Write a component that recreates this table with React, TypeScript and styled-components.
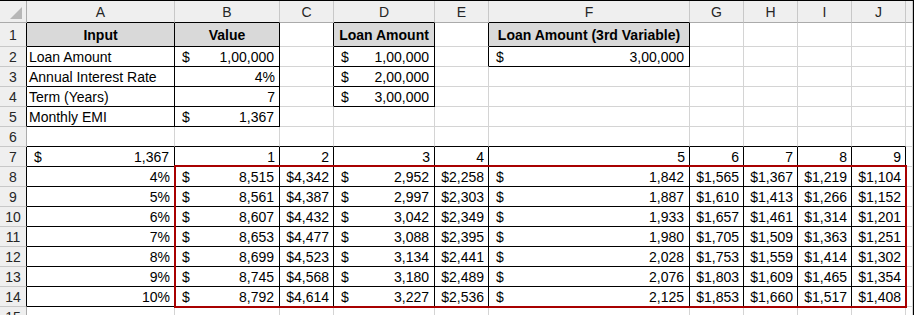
import React from 'react';
import styled, { createGlobalStyle } from 'styled-components';

const GlobalStyle = createGlobalStyle`
  body {
    margin: 0;
    background: #fff;
  }
`;

const GRID = '#d4d4d4';
const INK = '#000';
const HEAD_BG = '#efefef';
const HEAD_LINE = '#ababab';
const TITLE_BG = '#d9d9d9';

const COL_WIDTHS = [148, 105, 54, 101, 54, 201, 54, 54, 54, 54, 7];
const LETTERS = ['A', 'B', 'C', 'D', 'E', 'F', 'G', 'H', 'I', 'J', ''];

type Kind = 'text' | 'right' | 'center' | 'acc';

interface ICell {
  kind: Kind;
  value: string;
  bold?: boolean;
  title?: boolean;
}

const Sheet = styled.div`
  position: relative;
  width: 914px;
  height: 315px;
  box-sizing: border-box;
  border-top: 1px solid #000;
  border-right: 1px solid #000;
  overflow: hidden;
  display: grid;
  grid-template-columns: 27px ${COL_WIDTHS.map(w => `${w}px`).join(' ')};
  grid-template-rows: 22px 24px repeat(14, 20px);
  font-family: 'Liberation Sans', Arial, sans-serif;
  font-size: 14px;
  color: #000;
`;

const Corner = styled.div`
  position: relative;
  background: ${HEAD_BG};
  border-right: 1px solid ${HEAD_LINE};
  border-bottom: 1px solid ${HEAD_LINE};
  svg {
    position: absolute;
    right: 4px;
    bottom: 3px;
  }
`;

const ColHead = styled.div<{ $edge: string }>`
  display: flex;
  align-items: center;
  justify-content: center;
  background: ${HEAD_BG};
  color: #262626;
  border-right: 1px solid #c8c8c8;
  border-bottom: 1px solid ${({ $edge }) => $edge};
  overflow: hidden;
`;

const RowHead = styled.div<{ $edge: string }>`
  display: flex;
  align-items: center;
  justify-content: center;
  background: ${HEAD_BG};
  color: #262626;
  border-right: 1px solid ${({ $edge }) => $edge};
  border-bottom: 1px solid #c8c8c8;
`;

const Cell = styled.div<{
  $right: string;
  $bottom: string;
  $kind: Kind;
  $bold?: boolean;
  $title?: boolean;
}>`
  display: flex;
  align-items: center;
  justify-content: ${({ $kind }) =>
    $kind === 'acc' ? 'space-between' : $kind === 'right' ? 'flex-end' : $kind === 'center' ? 'center' : 'flex-start'};
  padding: ${({ $kind }) => ($kind === 'acc' ? '0 5px 0 7px' : $kind === 'right' ? '0 4px 0 2px' : '0 2px')};
  background: ${({ $title }) => ($title ? TITLE_BG : 'transparent')};
  font-weight: ${({ $bold }) => ($bold ? 700 : 400)};
  border-right: 1px solid ${({ $right }) => $right};
  border-bottom: 1px solid ${({ $bottom }) => $bottom};
  white-space: nowrap;
  overflow: visible;
  min-width: 0;
`;

const Highlight = styled.div`
  position: absolute;
  grid-row: 9 / 16;
  grid-column: 3 / 12;
  top: -2px;
  left: -1px;
  right: -1px;
  bottom: -1px;
  border: 2px solid #a80000;
  pointer-events: none;
`;

const t = (value: string): ICell => ({ kind: 'text', value });
const r = (value: string): ICell => ({ kind: 'right', value });
const acc = (value: string): ICell => ({ kind: 'acc', value });
const cur = (value: string): ICell => ({ kind: 'right', value: `$${value}` });
const title = (value: string): ICell => ({ kind: 'center', value, bold: true, title: true });

const table: { [row: number]: { [col: number]: ICell } } = {
  1: { 0: title('Input'), 1: title('Value'), 3: title('Loan Amount'), 5: title('Loan Amount (3rd Variable)') },
  2: { 0: t('Loan Amount'), 1: acc('1,00,000'), 3: acc('1,00,000'), 5: acc('3,00,000') },
  3: { 0: t('Annual Interest Rate'), 1: r('4%'), 3: acc('2,00,000') },
  4: { 0: t('Term (Years)'), 1: r('7'), 3: acc('3,00,000') },
  5: { 0: t('Monthly EMI'), 1: acc('1,367') },
  7: {
    0: acc('1,367'),
    1: r('1'), 2: r('2'), 3: r('3'), 4: r('4'), 5: r('5'), 6: r('6'), 7: r('7'), 8: r('8'), 9: r('9'),
  },
};

const emi = [
  ['4%', '8,515', '4,342', '2,952', '2,258', '1,842', '1,565', '1,367', '1,219', '1,104'],
  ['5%', '8,561', '4,387', '2,997', '2,303', '1,887', '1,610', '1,413', '1,266', '1,152'],
  ['6%', '8,607', '4,432', '3,042', '2,349', '1,933', '1,657', '1,461', '1,314', '1,201'],
  ['7%', '8,653', '4,477', '3,088', '2,395', '1,980', '1,705', '1,509', '1,363', '1,251'],
  ['8%', '8,699', '4,523', '3,134', '2,441', '2,028', '1,753', '1,559', '1,414', '1,302'],
  ['9%', '8,745', '4,568', '3,180', '2,489', '2,076', '1,803', '1,609', '1,465', '1,354'],
  ['10%', '8,792', '4,614', '3,227', '2,536', '2,125', '1,853', '1,660', '1,517', '1,408'],
];

// columns B, D, F use accounting format, the rest plain currency
const accCols = [1, 3, 5];

emi.forEach((line, i) => {
  const row: { [col: number]: ICell } = { 0: r(line[0]) };
  line.slice(1).forEach((v, j) => {
    const col = j + 1;
    row[col] = accCols.includes(col) ? acc(v) : cur(v);
  });
  table[8 + i] = row;
});

// bordered ranges: [rowFrom, rowTo, colFrom, colTo]
const boxes = [
  [1, 5, 0, 1],
  [1, 4, 3, 3],
  [1, 2, 5, 5],
  [7, 14, 0, 9],
];

const inBox = (row: number, col: number) =>
  boxes.some(([r1, r2, c1, c2]) => row >= r1 && row <= r2 && col >= c1 && col <= c2);

const ROWS = Array.from({ length: 15 }, (_, i) => i + 1);

const CornerMark = () => (
  <svg width="12" height="12" viewBox="0 0 12 12">
    <polygon points="0,12 12,12 12,0" fill="#b7b7b7" />
  </svg>
);

const App = () => (
  <>
    <GlobalStyle />
    <Sheet>
      <Corner>
        <CornerMark />
      </Corner>
      {LETTERS.map((letter, col) => (
        <ColHead key={`h${col}`} $edge={inBox(1, col) ? INK : HEAD_LINE}>
          {letter}
        </ColHead>
      ))}
      {ROWS.map(row => (
        <React.Fragment key={row}>
          <RowHead $edge={inBox(row, 0) ? INK : HEAD_LINE}>{row}</RowHead>
          {LETTERS.map((_, col) => {
            const cell = table[row]?.[col];
            const right = inBox(row, col) || inBox(row, col + 1) ? INK : GRID;
            const bottom = inBox(row, col) || inBox(row + 1, col) ? INK : GRID;
            return (
              <Cell
                key={`${row}-${col}`}
                $right={right}
                $bottom={bottom}
                $kind={cell ? cell.kind : 'text'}
                $bold={cell?.bold}
                $title={cell?.title}
              >
                {cell?.kind === 'acc' ? (
                  <>
                    <span>$</span>
                    <span>{cell.value}</span>
                  </>
                ) : (
                  cell?.value
                )}
              </Cell>
            );
          })}
        </React.Fragment>
      ))}
      <Highlight />
    </Sheet>
  </>
);

export default App;
